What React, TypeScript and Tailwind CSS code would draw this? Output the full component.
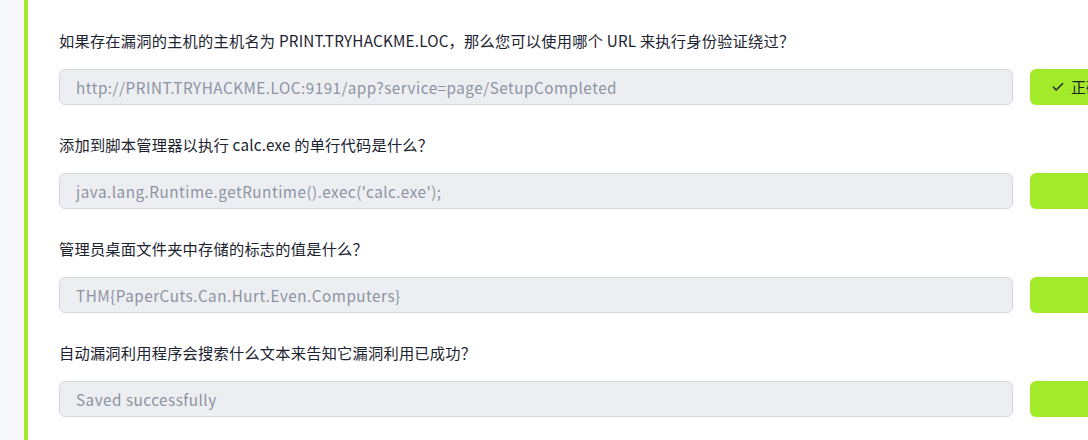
import { Check } from "lucide-react";

const questions = [
  {
    q: "如果存在漏洞的主机的主机名为 PRINT.TRYHACKME.LOC，那么您可以使用哪个 URL 来执行身份验证绕过？",
    a: "http://PRINT.TRYHACKME.LOC:9191/app?service=page/SetupCompleted",
    shown: true,
  },
  {
    q: "添加到脚本管理器以执行 calc.exe 的单行代码是什么？",
    a: "java.lang.Runtime.getRuntime().exec('calc.exe');",
    shown: false,
  },
  {
    q: "管理员桌面文件夹中存储的标志的值是什么？",
    a: "THM{PaperCuts.Can.Hurt.Even.Computers}",
    shown: false,
  },
  {
    q: "自动漏洞利用程序会搜索什么文本来告知它漏洞利用已成功？",
    a: "Saved successfully",
    shown: false,
  },
];

const QuestionRow = ({ q, a, shown }: { q: string; a: string; shown: boolean }) => {
  return (
    <div className="flex flex-col">
      <div className="text-[15.25px] leading-[24px] tracking-[0.2px] text-[#1c2330]">{q}</div>
      <div className="mt-[17px] flex flex-row items-center gap-[17px]">
        <div
          className="
            w-[954px]
            h-[36px]
            shrink-0
            flex
            items-center
            px-[16px]
            rounded-[6px]
            border
            border-[#d5d9df]
            bg-[#eceef2]
            text-[15.25px]
            tracking-[0.5px]
            text-[#8c94a2]
          "
        >
          {a}
        </div>
        <div className="w-[140px] h-[36px] shrink-0 rounded-[6px] bg-[#a3ea2a] flex items-center pl-[21px] gap-[6px] text-[15px] text-[#1c2330]">
          {shown && (
            <>
              <Check size={14} strokeWidth={2.5} />
              <span>正确答案</span>
            </>
          )}
        </div>
      </div>
    </div>
  );
};

export default function App() {
  return (
    <div
      className="w-[1088px] h-[440px] overflow-hidden flex flex-row bg-white"
      style={{ fontFamily: '"Noto Sans CJK SC", "Noto Sans", sans-serif' }}
    >
      <div className="w-[24px] shrink-0 bg-[#f7f8fa]" />
      <div className="w-[4px] shrink-0 bg-[#a3ea2a]" />
      <div className="flex flex-col gap-[27px] pl-[31px] pt-[28px]">
        {questions.map((item) => (
          <QuestionRow key={item.q} {...item} />
        ))}
      </div>
    </div>
  );
}
